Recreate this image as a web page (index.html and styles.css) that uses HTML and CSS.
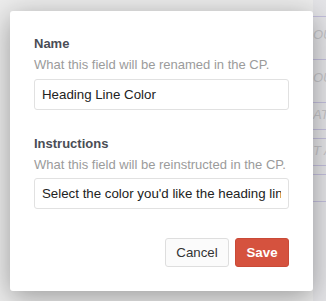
FILE: index.html
```html
<!DOCTYPE html>
<html lang="en">
<head>
    <meta charset="UTF-8">
    <meta name="viewport" content="width=device-width, initial-scale=1.0">
    <title>Edit Field</title>
    <link rel="stylesheet" href="styles.css">
</head>
<body>
    <!-- page behind the overlay -->
    <div class="backdrop">
        <div class="ghost-field"><span>OU</span></div>
        <div class="ghost-field"><span>OU</span></div>
        <div class="ghost-field short"><span>AT</span></div>
        <div class="ghost-field short"><span>T A</span></div>
        <div class="ghost-field short"></div>
    </div>

    <div class="modal">
        <div class="field">
            <label class="field-label" for="name-input">Name</label>
            <p class="field-hint">What this field will be renamed in the CP.</p>
            <input id="name-input" class="text-input" type="text" value="Heading Line Color">
        </div>

        <div class="field">
            <label class="field-label" for="instr-input">Instructions</label>
            <p class="field-hint">What this field will be reinstructed in the CP.</p>
            <input id="instr-input" class="text-input" type="text" value="Select the color you'd like the heading line to be.">
        </div>

        <div class="actions">
            <button class="btn btn-cancel">Cancel</button>
            <button class="btn btn-save">Save</button>
        </div>
    </div>
</body>
</html>
```

FILE: styles.css
```css
body {
    margin: 0;
    width: 326px;
    height: 301px;
    overflow: hidden;
    background-color: #ececec;
    font-family: "Liberation Sans", Arial, sans-serif;
    position: relative;
}
.backdrop {
    margin-left: 313px;
    padding-top: 16px;
    display: flex;
    flex-direction: column;
    background-color: #e4e4e7;
    height: 285px;
}
.ghost-field {
    height: 43px;
    border-top: 1px solid #c3bfdc;
    display: flex;
    align-items: center;
    padding-bottom: 8px;
    box-sizing: border-box;
    overflow: hidden;
}
.ghost-field.short {
    height: 28px;
    padding-bottom: 4px;
    margin-bottom: 8px;
    border-bottom: 1px solid #c3bfdc;
}
.ghost-field span {
    font-style: italic;
    font-size: 13px;
    color: #c4c4c8;
    white-space: nowrap;
}
.modal {
    position: absolute;
    left: 10px;
    top: 11px;
    width: 303px;
    box-sizing: border-box;
    padding: 25px 24px 24px 24px;
    background-color: white;
    border-radius: 3px;
    box-shadow: 0 6px 28px rgba(0, 0, 0, 0.35);
}
.field + .field {
    margin-top: 26px;
}
.field-label {
    display: block;
    font-size: 13px;
    font-weight: bold;
    line-height: 16px;
    color: #4a4d55;
}
.field-hint {
    margin: 4px 0 0 0;
    font-size: 13px;
    line-height: 18px;
    color: #9b9b9b;
}
.text-input {
    display: block;
    width: 100%;
    box-sizing: border-box;
    height: 31px;
    margin-top: 5px;
    padding: 0 7px;
    border: 1px solid #e1e1e1;
    border-radius: 3px;
    font-family: inherit;
    font-size: 13.3px;
    color: #222;
    background: white;
}
.field + .field .text-input {
    margin-top: 4px;
}
.actions {
    display: flex;
    justify-content: flex-end;
    gap: 6px;
    margin-top: 29px;
}
.btn {
    height: 29px;
    border-radius: 3px;
    font-family: inherit;
    font-size: 13.3px;
    cursor: pointer;
}
.btn-cancel {
    width: 64px;
    background-color: #fbfbfb;
    border: 1px solid #dedede;
    color: #333;
}
.btn-save {
    width: 54px;
    background-color: #d5523e;
    border: 1px solid #c94a37;
    color: white;
    font-weight: bold;
}
```
